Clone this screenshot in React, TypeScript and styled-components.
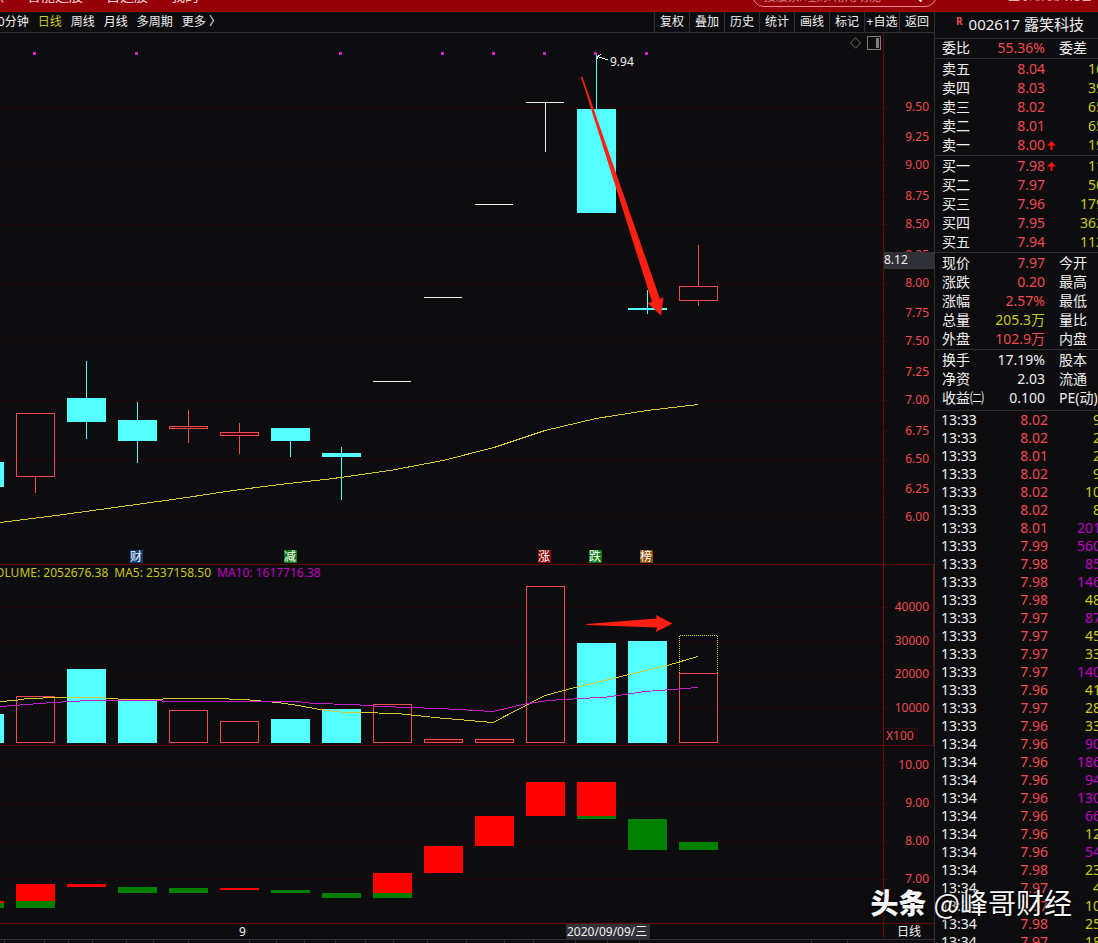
import React from 'react';
import styled, { createGlobalStyle } from 'styled-components';

const c = {
  bg: '#0d0d0f',
  red: '#ee4a50',
  cyan: '#54ffff',
  white: '#f0f0f0',
  yellow: '#c8c81e',
  maYellow: '#d8c838',
  magenta: '#c41ec8',
  purple: '#c000c4',
  frame: '#64060f',
  grid: '#1c0a0e',
  line: '#303033',
};

const GlobalStyle = createGlobalStyle`
  * { box-sizing: border-box; }
  body {
    margin: 0;
    background: ${c.bg};
    color: ${c.white};
    font: 12px/16px "Noto Sans", "Noto Sans CJK SC", sans-serif;
  }
  button, input { font: inherit; color: inherit; background: none; border: 0; padding: 0; margin: 0; }
  table { border-collapse: collapse; }
  td, th { padding: 0; font-weight: 400; text-align: left; }
  svg { display: block; }
`;

const Terminal = styled.div`
  position: relative;
  display: flex;
  flex-direction: column;
  height: 100vh;
  overflow: hidden;
`;

const TopBar = styled.header`
  flex: none;
  display: flex;
  align-items: flex-end;
  height: 12px;
  overflow: hidden;
  background: #960008;
  color: #f4d4d4;
`;

const TopNav = styled.nav`
  flex: 1;
  display: flex;
  gap: 23px;
  height: 24px;
  margin-left: -24px;
  font-size: 14px;
  line-height: 16px;
`;

const SearchBox = styled.label`
  flex: none;
  display: flex;
  align-items: flex-end;
  width: 185px;
  height: 25px;
  margin-right: 71px;
  margin-bottom: 5px;
  padding: 0 14px 1px 11px;
  border: 1px solid #f08a8c;
  border-radius: 12px;

  input { flex: 1; min-width: 0; height: 18px; outline: 0; }
  input::placeholder { color: #d88488; opacity: 1; }
  svg { margin-bottom: 3px; }
`;

const TopNote = styled.span`
  flex: none;
  width: 90px;
  height: 24px;
  white-space: nowrap;
`;

const Body = styled.div`
  flex: 1;
  display: flex;
  min-height: 0;
`;

const Main = styled.main`
  flex: 1;
  min-width: 0;
  display: flex;
  flex-direction: column;
`;

const Toolbar = styled.div`
  flex: none;
  display: flex;
  justify-content: space-between;
  height: 21px;
  overflow: hidden;
  border-bottom: 1px solid ${c.line};
`;

const Periods = styled.div`
  display: flex;
  gap: 9px;
  margin-left: -9px;
`;

const Period = styled.button<{ $active?: boolean }>`
  white-space: nowrap;
  color: ${(p) => (p.$active ? c.yellow : c.white)};
`;

const Tools = styled.div`
  display: flex;
`;

const Tool = styled.button`
  width: 35px;
  border-left: 1px solid ${c.line};
  white-space: nowrap;
`;

const Pane = styled.section<{ $height: number }>`
  flex: none;
  display: flex;
  height: ${(p) => p.$height}px;
  border-bottom: 1px solid ${c.frame};
`;

const Plot = styled.div`
  position: relative;
  flex: 1;
  min-width: 0;
  overflow: hidden;
`;

const Drawing = styled.svg`
  width: 100%;
  height: 100%;
  shape-rendering: crispEdges;
`;

const Axis = styled.div<{ $boxed?: boolean }>`
  flex: none;
  width: 51px;
  border-left: 1px solid ${(p) => (p.$boxed ? '#7c0812' : c.frame)};
  border-right: ${(p) => (p.$boxed ? '1px solid #7c0812' : '0')};
`;

const VolumeLegend = styled.div`
  position: absolute;
  top: 0;
  left: -12px;
  display: flex;
  gap: 6px;
  white-space: nowrap;
  color: ${c.yellow};
`;

const Ma10 = styled.span`
  color: ${c.purple};
`;

const ChartTools = styled.div`
  position: absolute;
  top: 3px;
  right: 2px;
  display: flex;
  gap: 6px;
`;

const IconButton = styled.button`
  display: flex;
  align-items: center;
`;

const DateRow = styled.div`
  flex: none;
  display: flex;
  height: 16px;
  border-bottom: 1px solid ${c.line};
`;

const PeriodLabel = styled.div`
  flex: none;
  width: 51px;
  border-left: 1px solid ${c.frame};
  line-height: 15px;
  text-align: center;
`;

const Ruler = styled.div`
  flex: 1;
  min-height: 3px;
`;

const Side = styled.aside`
  flex: none;
  width: 164px;
  overflow: hidden;
  border-left: 1px solid ${c.line};
  font-size: 14px;
`;

const StockTitle = styled.h1`
  display: flex;
  gap: 6px;
  height: 27px;
  margin: 0;
  padding-left: 21px;
  border-bottom: 1px solid ${c.line};
  font-size: 15px;
  font-weight: 400;
  line-height: 25px;
  white-space: nowrap;

  sup { font-size: 10px; font-weight: 700; line-height: 18px; color: ${c.red}; }
`;

const Block = styled.table<{ $pad?: number; $end?: number }>`
  display: block;
  width: 175px;
  padding: ${(p) => p.$pad ?? 0}px 0 ${(p) => p.$end ?? 0}px 7px;
  border-bottom: 1px solid ${c.line};

  tbody { display: block; }
`;

const QuoteRow = styled.tr`
  display: grid;
  grid-template-columns: 43px 60px 14px 45px;
  height: 19px;
  line-height: 18px;
  white-space: nowrap;
`;

const TickTable = styled.table`
  display: block;
  width: 175px;
  padding-left: 6px;

  tbody { display: block; }
`;

const TickRow = styled.tr`
  display: grid;
  grid-template-columns: 47px 60px 53px;
  height: 18px;
  line-height: 18px;
`;

const Num = styled.td<{ $color: string }>`
  && { text-align: right; }
  color: ${(p) => p.$color};
`;

const Mark = styled.td`
  display: flex;
  align-items: center;
  padding-left: 2px;
`;

const Watermark = styled.div`
  position: absolute;
  right: 26px;
  bottom: 21px;
  display: flex;
  gap: 7px;
  font: 400 28px/40px "Noto Sans CJK SC", sans-serif;
  color: #f6f6f6;
  text-shadow: 0 0 3px #000, 1px 1px 2px #000;
  white-space: nowrap;

  b { font-size: 28px; font-weight: 900; }
`;

/* Vertical origin of every pane, so all data shares one coordinate space. */
const PRICE_TOP = 33;
const VOLUME_TOP = 565;
const RANGE_TOP = 746;
const STEP = 51;
const BAR = 39;
const barX = (i: number) => 16 + (i - 1) * STEP;

type Kind = 'up' | 'down' | 'flat';
interface Candle { kind: Kind; top: number; bottom: number; high: number; low: number }

const k = (kind: Kind, top: number, bottom: number, high = top, low = bottom): Candle => ({ kind, top, bottom, high, low });

const candles: Candle[] = [
  k('down', 462, 487), k('up', 413, 477, 413, 493), k('down', 398, 422, 361, 439), k('down', 420, 441, 402, 463),
  k('up', 426, 429, 410, 443), k('up', 432, 436, 423, 454), k('down', 428, 441, 428, 457), k('down', 453, 457, 447, 500),
  k('flat', 381, 382), k('flat', 297, 298), k('flat', 204, 205), k('flat', 102, 103, 102, 152),
  k('down', 109, 213, 54, 213), k('down', 308, 310, 290, 314), k('up', 286, 301, 245, 306),
];

const volumes: [Kind, number][] = [
  ['down', 714], ['up', 696], ['down', 669], ['down', 701], ['up', 710], ['up', 721], ['down', 719], ['down', 709],
  ['up', 704], ['up', 739], ['up', 739], ['up', 586], ['down', 643], ['down', 641], ['up', 673],
];

const RED = '#ff0000';
const GREEN = '#008000';
const ranges: [number, string, number, number][] = [
  [0, RED, 901, 903], [0, GREEN, 903, 908], [1, RED, 884, 901], [1, GREEN, 901, 908], [2, RED, 884, 887],
  [3, GREEN, 887, 893], [4, GREEN, 888, 893], [5, RED, 888, 890], [6, GREEN, 890, 893], [7, GREEN, 893, 898],
  [8, RED, 873, 893], [8, GREEN, 893, 898], [9, RED, 846, 873], [10, RED, 816, 846], [11, RED, 782, 816],
  [12, RED, 782, 816], [12, GREEN, 816, 819], [13, GREEN, 819, 850], [14, GREEN, 842, 850],
];

const priceScale: [string, number][] = [
  ['9.50', 107], ['9.25', 137], ['9.00', 165], ['8.75', 196], ['8.50', 224], ['8.25', 255], ['8.00', 283], ['7.75', 313],
  ['7.50', 341], ['7.25', 372], ['7.00', 400], ['6.75', 431], ['6.50', 459], ['6.25', 489], ['6.00', 517],
];
const volumeScale: [string, number][] = [['40000', 607], ['30000', 641], ['20000', 674], ['10000', 708]];
const rangeScale: [string, number][] = [['10.00', 765], ['9.00', 803], ['8.00', 841], ['7.00', 879]];

const events: [string, number, string][] = [
  ['财', 130, '#0c3c78'], ['减', 284, '#107818'], ['涨', 538, '#8c0408'], ['跌', 589, '#107818'], ['榜', 640, '#8c4c08'],
];

const rulerTicks = [4, 44, 68, 92, 126, 153, 188, 249, 276, 304, 335, 365, 393, 427, 466, 504, 533, 575, 607, 639, 811, 847];

function GridLines({ scale }: { scale: [string, number][] }) {
  return <>{scale.map(([t, y]) => <rect key={t} x="0" y={y} width="100%" height="1" fill={c.grid} />)}</>;
}

function ScaleLabels({ scale }: { scale: [string, number][] }) {
  return (
    <>
      {scale.map(([t, y]) => (
        <g key={t}>
          <rect x="0" y={y} width="4" height="1" fill="#3c060c" />
          <text x="45" y={y + 4} textAnchor="end" fontSize="12" fill={c.red}>{t}</text>
        </g>
      ))}
    </>
  );
}

function Bar({ i, kind, top, bottom }: { i: number; kind: Kind; top: number; bottom: number }) {
  const x = barX(i);
  if (kind === 'up') {
    return <rect x={x + 0.5} y={top + 0.5} width={BAR - 1} height={bottom - top - 1} fill={bottom - top < 6 ? '#3a0508' : 'none'} stroke={c.red} />;
  }
  return <rect x={x} y={top} width={kind === 'flat' ? BAR - 1 : BAR} height={bottom - top} fill={kind === 'flat' ? c.white : c.cyan} />;
}

function PriceChart() {
  return (
    <Pane $height={532} aria-label="K线">
      <Plot>
        <Drawing>
          <g transform={`translate(0 ${-PRICE_TOP})`}>
            <GridLines scale={priceScale.filter((_, i) => i % 2 === 0)} />
            {candles.map((d, i) => {
              const color = d.kind === 'up' ? c.red : d.kind === 'down' ? c.cyan : c.white;
              return (
                <g key={i}>
                  <rect x={barX(i) + 19} y={d.high} width="1" height={Math.max(0, d.top - d.high)} fill={color} />
                  <rect x={barX(i) + 19} y={d.bottom} width="1" height={Math.max(0, d.low - d.bottom)} fill={color} />
                  <Bar i={i} kind={d.kind} top={d.top} bottom={d.bottom} />
                </g>
              );
            })}
            <polyline
              fill="none"
              stroke={c.maYellow}
              points="0,522.5 60,515 100,509.5 140,504 180,498.5 233,490.5 280,484.5 333,478.5 390,470.5 443,460.5 494,447.5 545,430.5 596,418.5 647,410.5 698,404.5"
            />
            {[33, 135, 339, 441, 492, 543, 594, 645].map((x) => (
              <rect key={x} x={x} y="52" width="3" height="3" fill="#d020d0" />
            ))}
            <path d="M597.5 56.5 L608 60 M597 59.5 L597.5 56.5 L601 54.5" fill="none" stroke={c.white} />
            <text x="610" y="66" fontSize="12" fill={c.white}>9.94</text>
            {events.map(([t, x, fill]) => (
              <g key={t}>
                <rect x={x} y="550" width="13" height="13" fill={fill} />
                <text x={x} y="561" fontSize="12" fill="#fff">{t}</text>
              </g>
            ))}
            <polygon
              shapeRendering="auto"
              points="581,77 582.5,77 660,299 663.5,297 661,315.5 647.5,303 652,302"
              fill="#ff2014"
            />
          </g>
        </Drawing>
        <ChartTools>
          <IconButton aria-label="指标">
            <svg width="11" height="12" viewBox="0 0 11 12" fill="none" stroke="#6c6c6c"><path d="M5.5 .8 L10.5 6 L5.5 11.2 L.5 6 Z" /></svg>
          </IconButton>
          <IconButton aria-label="侧栏">
            <svg width="14" height="14" viewBox="0 0 14 14"><rect x=".5" y=".5" width="13" height="13" fill="none" stroke="#7c7c7c" /><rect x="9" y="2" width="3" height="10" fill="#7c7c7c" /></svg>
          </IconButton>
        </ChartTools>
      </Plot>
      <Axis>
        <Drawing>
          <g transform={`translate(0 ${-PRICE_TOP})`}>
            <ScaleLabels scale={priceScale} />
            <rect x="0" y="252" width="50" height="17" fill="#303038" />
            <text x="0" y="264" fontSize="12" fill={c.white}>8.12</text>
          </g>
        </Drawing>
      </Axis>
    </Pane>
  );
}

function VolumeChart() {
  return (
    <Pane $height={181} aria-label="成交量">
      <Plot>
        <Drawing>
          <g transform={`translate(0 ${-VOLUME_TOP})`}>
            <GridLines scale={volumeScale} />
            {volumes.map(([kind, top], i) => <Bar key={i} i={i} kind={kind} top={top} bottom={743} />)}
            <path d="M679.5 673 V635.5 H717.5 V673" fill="none" stroke="#d8d820" strokeDasharray="1 1" />
            <polyline
              fill="none"
              stroke={c.maYellow}
              points="0,701.5 15,700.5 27,698.5 60,697.5 97,697.5 125,699.5 162,699.5 164,698.5 213,698.5 245,699.5 277,702.5 295,705 320,709.5 340,712 397,713.5 440,718 493,722.5 545,695.5 577,687 617,677.5 667,665.5 698,656.5"
            />
            <polyline
              fill="none"
              stroke={c.magenta}
              points="0,706.5 27,704.5 53,702.5 80,701 107,700.5 157,700.5 167,701.5 297,701.5 313,703.5 353,704.5 373,706 407,707.5 440,708.5 493,711.5 525,704 548,700.5 607,697 645,691.5 698,687.5"
            />
            <polygon
              shapeRendering="auto"
              points="586.5,624 656.5,618.5 656,615 672.5,623.5 656,632 657,627.5 586.5,625"
              fill="#ff2014"
            />
          </g>
        </Drawing>
        <VolumeLegend>
          <span>VOLUME: 2052676.38</span>
          <span>MA5: 2537158.50</span>
          <Ma10>MA10: 1617716.38</Ma10>
        </VolumeLegend>
      </Plot>
      <Axis $boxed>
        <Drawing>
          <g transform={`translate(0 ${-VOLUME_TOP})`}>
            <ScaleLabels scale={volumeScale} />
            <path d="M0 728.5 H33.5 V743" fill="none" stroke={c.frame} strokeDasharray="1 1" />
            <text x="2" y="740" fontSize="12" fill={c.red}>X100</text>
          </g>
        </Drawing>
      </Axis>
    </Pane>
  );
}

function RangeChart() {
  return (
    <Pane $height={178} aria-label="区间">
      <Plot>
        <Drawing>
          <g transform={`translate(0 ${-RANGE_TOP})`}>
            <GridLines scale={rangeScale} />
            {ranges.map(([i, fill, top, bottom], n) => (
              <rect key={n} x={barX(i)} y={top} width={BAR} height={bottom - top} fill={fill} />
            ))}
          </g>
        </Drawing>
      </Plot>
      <Axis>
        <Drawing>
          <g transform={`translate(0 ${-RANGE_TOP})`}>
            <ScaleLabels scale={rangeScale} />
          </g>
        </Drawing>
      </Axis>
    </Pane>
  );
}

function UpArrow() {
  return <svg width="9" height="9" viewBox="0 0 9 9" fill="#ff1010"><path d="M4.5 0 L9 4.5 H5.5 V9 H3.5 V4.5 H0 Z" /></svg>;
}

interface Quote { label: string; value: string; color: string; extra: string; extraColor?: string; up?: boolean }

const q = (label: string, value: string, color: string, extra: string, extraColor?: string, up?: boolean): Quote =>
  ({ label, value, color, extra, extraColor, up });

const ratio = [q('委比', '55.36%', c.red, '委差')];
const asks = [
  q('卖五', '8.04', c.red, '16', c.yellow), q('卖四', '8.03', c.red, '39', c.yellow), q('卖三', '8.02', c.red, '65', c.yellow),
  q('卖二', '8.01', c.red, '65', c.yellow), q('卖一', '8.00', c.red, '19', c.yellow, true),
];
const bids = [
  q('买一', '7.98', c.red, '11', c.yellow, true), q('买二', '7.97', c.red, '50', c.yellow), q('买三', '7.96', c.red, '179', c.yellow),
  q('买四', '7.95', c.red, '362', c.yellow), q('买五', '7.94', c.red, '112', c.yellow),
];
const summary = [
  q('现价', '7.97', c.red, '今开'), q('涨跌', '0.20', c.red, '最高'), q('涨幅', '2.57%', c.red, '最低'),
  q('总量', '205.3万', c.yellow, '量比'), q('外盘', '102.9万', c.red, '内盘'),
];
const basics = [
  q('换手', '17.19%', c.white, '股本'), q('净资', '2.03', c.white, '流通'), q('收益㈡', '0.100', c.white, 'PE(动)'),
];

const ticks: [string, string, string, boolean?][] = [
  ['13:33', '8.02', '9'], ['13:33', '8.02', '2'], ['13:33', '8.01', '2'], ['13:33', '8.02', '9'], ['13:33', '8.02', '10'],
  ['13:33', '8.02', '8'], ['13:33', '8.01', '201', true], ['13:33', '7.99', '560', true], ['13:33', '7.98', '85', true],
  ['13:33', '7.98', '146', true], ['13:33', '7.98', '48'], ['13:33', '7.97', '87', true], ['13:33', '7.97', '45'],
  ['13:33', '7.97', '33'], ['13:33', '7.97', '140', true], ['13:33', '7.96', '41'], ['13:33', '7.97', '28'],
  ['13:33', '7.96', '33'], ['13:34', '7.96', '90', true], ['13:34', '7.96', '186', true], ['13:34', '7.96', '94', true],
  ['13:34', '7.96', '130', true], ['13:34', '7.96', '66', true], ['13:34', '7.96', '12'], ['13:34', '7.96', '54', true],
  ['13:34', '7.98', '23'], ['13:34', '7.97', '4'], ['13:34', '7.97', '10'], ['13:34', '7.98', '25'], ['13:34', '7.97', '18'],
];

function QuoteBlock({ rows, pad, end }: { rows: Quote[]; pad?: number; end?: number }) {
  return (
    <Block $pad={pad} $end={end}>
      <tbody>
        {rows.map((r) => (
          <QuoteRow key={r.label}>
            <th scope="row">{r.label}</th>
            <Num $color={r.color}>{r.value}</Num>
            <Mark>{r.up && <UpArrow />}</Mark>
            {r.extraColor ? <Num $color={r.extraColor}>{r.extra}</Num> : <th scope="row">{r.extra}</th>}
          </QuoteRow>
        ))}
      </tbody>
    </Block>
  );
}

export default function App() {
  return (
    <Terminal>
      <GlobalStyle />
      <TopBar>
        <TopNav>
          <span>热点</span>
          <span>智能选股</span>
          <span>自选股</span>
          <span>我的</span>
        </TopNav>
        <SearchBox>
          <input type="search" aria-label="搜索" placeholder="搜股票/理财/常用功能" />
          <svg width="12" height="12" viewBox="0 0 12 12" fill="none" stroke="#fff" strokeWidth="2"><circle cx="5" cy="5" r="4" /><path d="M8 8 L11.5 11.5" /></svg>
        </SearchBox>
        <TopNote>登录领取大礼包</TopNote>
      </TopBar>
      <Body>
        <Main>
          <Toolbar>
            <Periods>
              {['60分钟', '日线', '周线', '月线', '多周期', '更多 〉'].map((t) => (
                <Period key={t} $active={t === '日线'}>{t}</Period>
              ))}
            </Periods>
            <Tools>
              {['复权', '叠加', '历史', '统计', '画线', '标记', '+自选', '返回'].map((t) => <Tool key={t}>{t}</Tool>)}
            </Tools>
          </Toolbar>
          <PriceChart />
          <VolumeChart />
          <RangeChart />
          <DateRow>
            <Plot>
              <Drawing>
                <text x="239" y="12" fontSize="12" fill={c.white}>9</text>
                <rect x="566" y="0" width="84" height="15" fill="#303038" />
                <text x="567" y="12" fontSize="12" fill={c.white}>2020/09/09/三</text>
              </Drawing>
            </Plot>
            <PeriodLabel>日线</PeriodLabel>
          </DateRow>
          <Ruler>
            <Drawing>
              {rulerTicks.map((x) => <rect key={x} x={x} y="0" width="1" height="100%" fill={c.line} />)}
            </Drawing>
          </Ruler>
        </Main>
        <Side>
          <StockTitle><sup>R</sup><span>002617 露笑科技</span></StockTitle>
          <QuoteBlock rows={ratio} />
          <QuoteBlock rows={asks} pad={1} />
          <QuoteBlock rows={bids} pad={1} />
          <QuoteBlock rows={summary} pad={1} />
          <QuoteBlock rows={basics} pad={1} end={2} />
          <TickTable>
            <tbody>
              {ticks.map(([time, price, size, big], i) => (
                <TickRow key={i}>
                  <td>{time}</td>
                  <Num $color={c.red}>{price}</Num>
                  <Num $color={big ? c.purple : c.yellow}>{size}</Num>
                </TickRow>
              ))}
            </tbody>
          </TickTable>
        </Side>
      </Body>
      <Watermark><b>头条</b><span>@峰哥财经</span></Watermark>
    </Terminal>
  );
}
